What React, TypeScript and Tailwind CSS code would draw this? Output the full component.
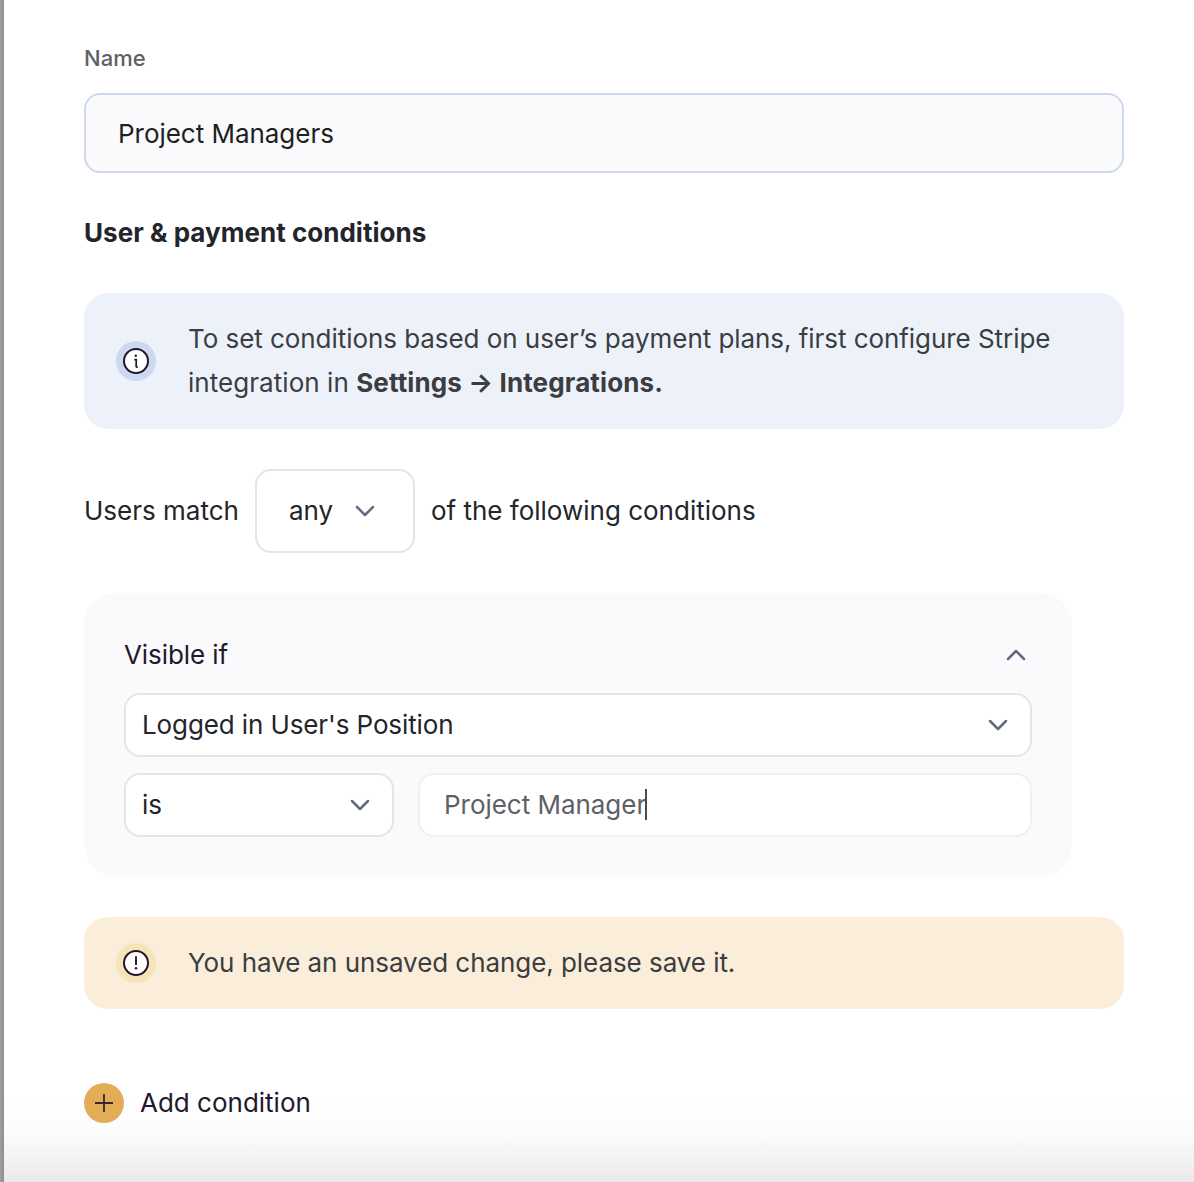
import React from "react";

type ChevronProps = {
  up?: boolean;
};

const Chevron = ({ up }: ChevronProps) => {
  return (
    <svg
      width="20"
      height="12"
      viewBox="0 0 20 12"
      fill="none"
      stroke="#636B82"
      strokeWidth="2.5"
      strokeLinecap="round"
      strokeLinejoin="round"
      className="shrink-0"
    >
      <path d={up ? "M2 10 10 2l8 8" : "M2 2l8 8 8-8"} />
    </svg>
  );
};

const InfoIcon = () => {
  return (
    <svg width="40" height="40" viewBox="0 0 40 40" className="shrink-0">
      <circle cx="20" cy="20" r="20" fill="#CDD9F0" />
      <circle cx="20" cy="20" r="12" fill="#fff" stroke="#23182B" strokeWidth="2" />
      <path
        d="M18.3 18.6h1.9V26.2M20.2 26.2h1.6"
        fill="none"
        stroke="#23182B"
        strokeWidth="1.7"
      />
      <circle cx="19.8" cy="14.8" r="1.2" fill="#23182B" />
    </svg>
  );
};

const WarningIcon = () => {
  return (
    <svg width="40" height="40" viewBox="0 0 40 40" className="shrink-0">
      <circle cx="20" cy="20" r="20" fill="#F5E5B8" />
      <circle cx="20" cy="20" r="12" fill="#fff" stroke="#23182B" strokeWidth="2" />
      <path d="M20 13.3v8.7" stroke="#23182B" strokeWidth="1.9" />
      <circle cx="20" cy="25.2" r="1.2" fill="#23182B" />
    </svg>
  );
};

const App = () => {
  return (
    <div className="flex h-[1182px] w-[1194px] overflow-hidden font-['Inter',sans-serif] text-[26px] leading-[44px] text-[#22252B]">
      <div className="w-1 shrink-0 bg-[linear-gradient(to_right,#a0a0a0,#8e8e8e)]" />
      <main className="flex-1 bg-[linear-gradient(to_bottom,#ffffff_1095px,#fcfcfc_1132px,#f5f5f5_1154px,#e9e9e9_1182px)] pl-20 pr-[70px]">
        <label className="block pt-9 text-[22px] font-medium text-[#5F6064]">
          Name
        </label>
        <div className="mt-[13px] flex h-20 items-center rounded-2xl border-2 border-[#CDD9F1] bg-[#FAFAFC] px-8 pt-[2px] tracking-[-0.03px] text-[#1F1F1F]">
          Project Managers
        </div>
        <h2 className="mt-[38px] font-bold tracking-[0.03px]">
          User &amp; payment conditions
        </h2>

        <div className="mt-[38px] flex h-[136px] items-center gap-8 rounded-3xl bg-[#EDF2FA] px-8 text-[#3B3D40]">
          <InfoIcon />
          <p>
            <span className="tracking-[-0.055px]">
              To set conditions based on user’s payment plans, first configure Stripe
            </span>
            <br />
            <span className="tracking-[0.05px]">integration in </span>
            <b className="tracking-[0.12px]">Settings → Integrations.</b>
          </p>
        </div>

        <div className="mt-10 flex h-[84px] items-center gap-4">
          <span>Users match</span>
          <div className="flex h-full w-40 items-center gap-[22px] rounded-2xl border-2 border-[#E4E4E9] bg-white pl-8">
            any
            <Chevron />
          </div>
          <span>of the following conditions</span>
        </div>

        <div className="mt-10 h-[284px] w-[988px] rounded-[32px] bg-[#FAFAFC] p-10">
          <div className="flex items-center justify-between pr-[6px] tracking-[-0.08px] text-[#23182B]">
            Visible if
            <Chevron up />
          </div>
          <div className="mt-4 flex h-16 items-center justify-between rounded-2xl border-2 border-[#E4E5E8] bg-white pl-4 pr-[22px] tracking-[-0.11px]">
            Logged in User's Position
            <Chevron />
          </div>
          <div className="mt-4 flex gap-6">
            <div className="flex h-16 w-[270px] items-center justify-between rounded-2xl border-2 border-[#E4E4E9] bg-white pl-4 pr-[22px]">
              is
              <Chevron />
            </div>
            <div className="flex h-16 flex-1 items-center rounded-2xl border-2 border-[#F0F0F2] bg-white pl-6 tracking-[-0.03px] text-[#5F6066]">
              Project Manager
              <span className="-ml-[1.5px] mb-[2px] h-[31px] w-[2px] bg-[#4A4B52]" />
            </div>
          </div>
        </div>

        <div className="mt-10 flex h-[92px] items-center gap-8 rounded-3xl bg-[#FAEDDA] px-8 tracking-[-0.06px] text-[#3B3D40]">
          <WarningIcon />
          You have an unsaved change, please save it.
        </div>

        <div className="mt-[72px] flex items-center gap-4 text-[#23182B]">
          <svg width="40" height="40" viewBox="0 0 40 40">
            <circle cx="20" cy="20" r="20" fill="#E3AC57" />
            <path d="M20 11v18M11 20h18" stroke="#3A2530" strokeWidth="1.8" />
          </svg>
          Add condition
        </div>
      </main>
    </div>
  );
};

export default App;
